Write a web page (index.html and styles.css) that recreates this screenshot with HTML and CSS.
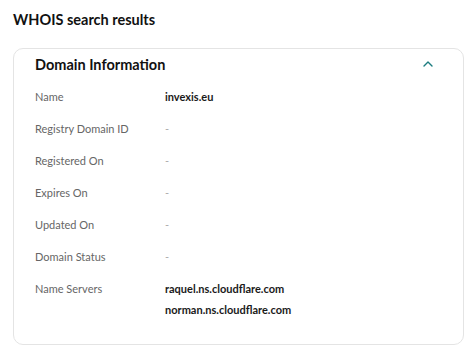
FILE: index.html
```html
<!DOCTYPE html>
<html lang="en">
<head>
  <meta charset="UTF-8">
  <title>WHOIS search results</title>
  <link rel="stylesheet" href="styles.css">
</head>
<body>

  <div class="page">
    <h1>WHOIS search results</h1>

    <div class="card">
      <div class="card-header">
        <h2>Domain Information</h2>
        <svg class="chevron" width="12" height="8" viewBox="0 0 12 8">
          <path d="M2 6 L6 2 L10 6" fill="none" stroke="#1b7c7f" stroke-width="1.4" stroke-linecap="round" stroke-linejoin="round"/>
        </svg>
      </div>

      <div class="info-row">
        <div class="label">Name</div>
        <div class="value">invexis.eu</div>
      </div>
      <div class="info-row">
        <div class="label">Registry Domain ID</div>
        <div class="value empty">-</div>
      </div>
      <div class="info-row">
        <div class="label">Registered On</div>
        <div class="value empty">-</div>
      </div>
      <div class="info-row">
        <div class="label">Expires On</div>
        <div class="value empty">-</div>
      </div>
      <div class="info-row">
        <div class="label">Updated On</div>
        <div class="value empty">-</div>
      </div>
      <div class="info-row">
        <div class="label">Domain Status</div>
        <div class="value empty">-</div>
      </div>
      <div class="info-row">
        <div class="label">Name Servers</div>
        <div class="value">
          <div>raquel.ns.cloudflare.com</div>
          <div>norman.ns.cloudflare.com</div>
        </div>
      </div>
    </div>
  </div>

</body>
</html>
```

FILE: styles.css
```css
body {
  font-family: 'Lato', sans-serif;
  background-color: #fff;
  color: #111;
  margin: 0;
  padding: 0;
}
.page {
  padding: 10px 8px 0 13px;
}
h1 {
  font-size: 14.5px;
  font-weight: 700;
  margin: 0 0 19px;
  line-height: 19px;
  color: #111;
}
.card {
  border: 1px solid #e4e4e4;
  border-radius: 10px;
  padding: 4px 21px 18px;
}
.card-header {
  display: flex;
  align-items: center;
  justify-content: space-between;
  height: 22px;
  margin-bottom: 6px;
  padding-right: 8px;
}
h2 {
  font-size: 14.5px;
  font-weight: 700;
  margin: 0;
  color: #111;
}
.chevron {
  display: block;
}
.info-row {
  display: flex;
  font-size: 11px;
  line-height: 21px;
  padding: 5px 0 6px;
}
.label {
  width: 130px;
  color: #666;
}
.value {
  color: #1a1a1a;
  font-weight: 700;
}
.value.empty {
  color: #aaa;
  font-weight: 400;
}
```
